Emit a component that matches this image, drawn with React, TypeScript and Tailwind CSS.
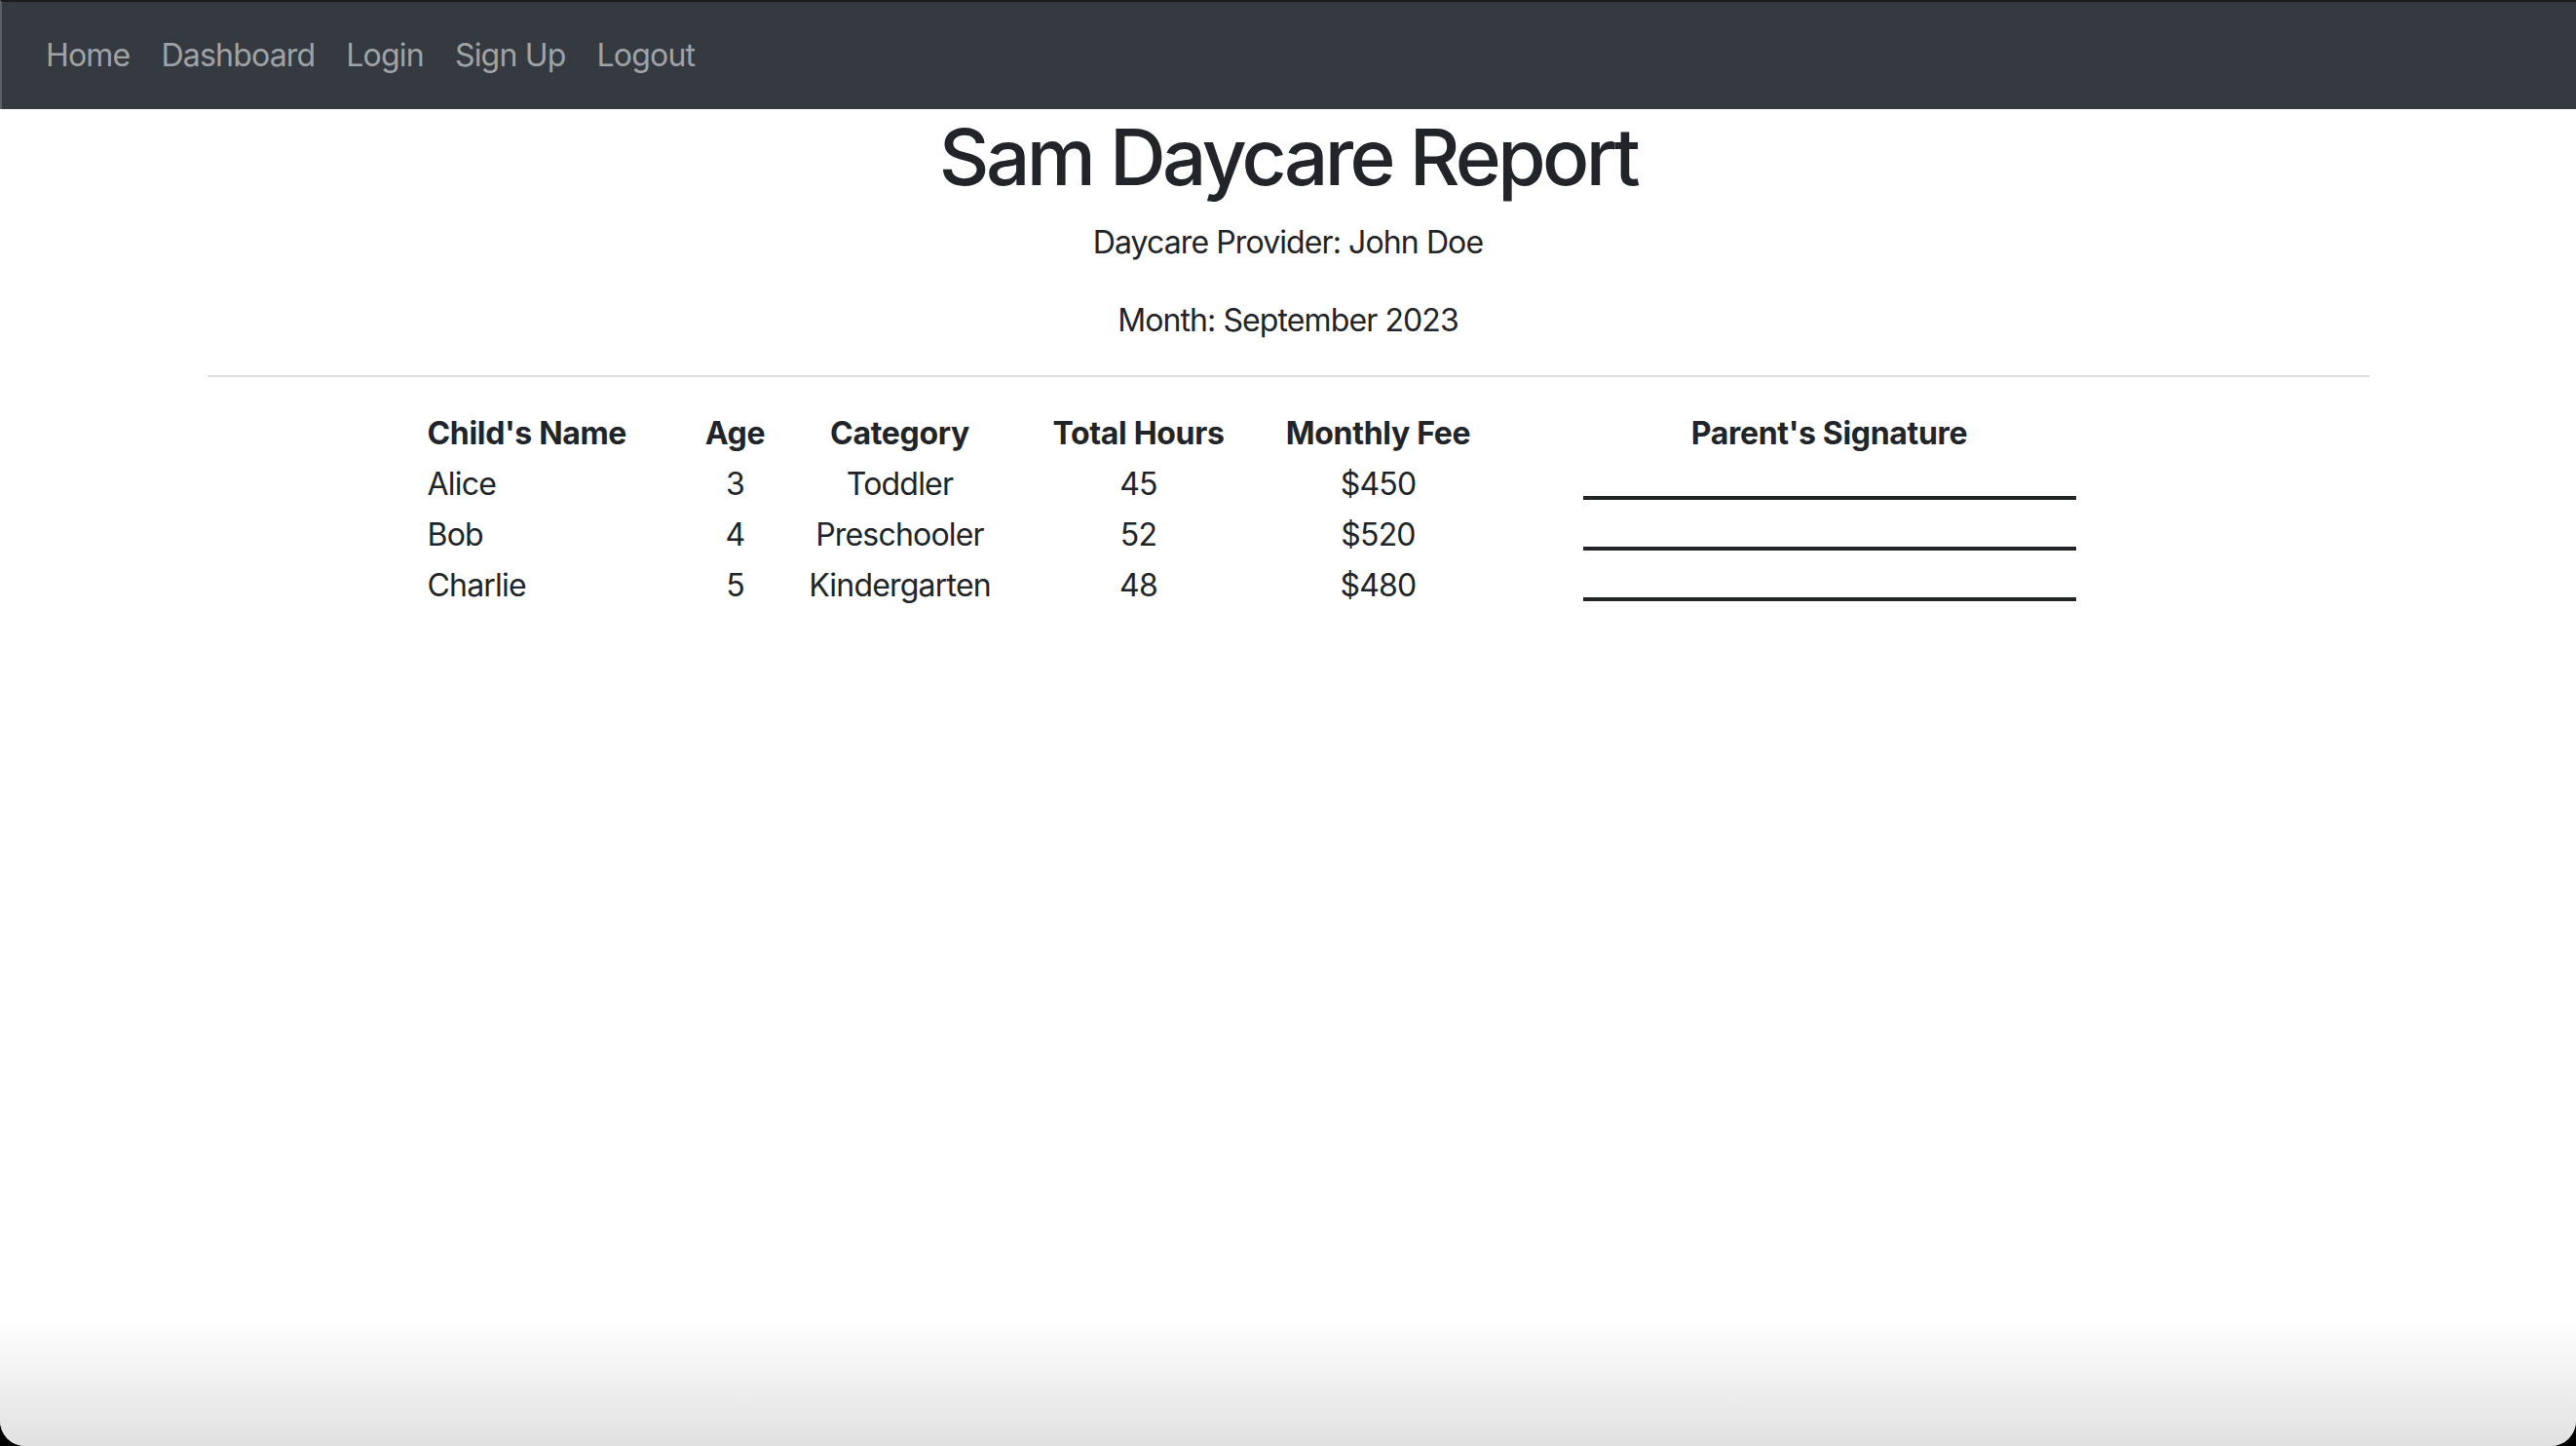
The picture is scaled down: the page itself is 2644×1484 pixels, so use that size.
import React from 'react';

const links = ['Home', 'Dashboard', 'Login', 'Sign Up', 'Logout'];

const children = [
  { name: 'Alice', age: 3, category: 'Toddler', hours: 45, fee: '$450' },
  { name: 'Bob', age: 4, category: 'Preschooler', hours: 52, fee: '$520' },
  { name: 'Charlie', age: 5, category: 'Kindergarten', hours: 48, fee: '$480' },
];

export default function App() {
  return (
    <div className="h-[1484px] w-full bg-black font-['Inter','Noto_Sans',sans-serif] text-[#212529]">
      <div className="relative h-full w-full overflow-hidden rounded-b-[26px] bg-white">
        <nav className="flex h-[112px] items-center border-t-2 border-l-2 border-t-[#1b1c1e] border-l-[#5d6165] bg-[#343a40] pl-[29px]">
          {links.map((l) => (
            <a key={l} href="#" className="px-4 text-[32px] leading-[48px] tracking-[-0.025em] text-[#a0a3a6]">
              {l}
            </a>
          ))}
        </nav>

        <div className="mx-auto w-[2219px]">
          <h1 className="mb-4 pt-[1px] text-center text-[80px] font-medium leading-[96px] tracking-[-0.045em]">Sam Daycare Report</h1>
          <p className="mb-8 text-center text-[32px] leading-[48px] tracking-[-0.028em]">Daycare Provider: John Doe</p>
          <p className="mb-8 text-center text-[32px] leading-[48px] tracking-[-0.028em]">Month: September 2023</p>
          <hr className="mb-8 border-t-2 border-[#dedede]" />

          <table className="ml-[206px] border-collapse text-[32px] leading-[48px]">
            <thead>
              <tr className="h-[52px]">
                <th className="w-[266px] pl-5 text-left font-bold tracking-[-0.01em]">Child's Name</th>
                <th className="w-[140px] text-center font-bold tracking-[-0.01em]">Age</th>
                <th className="w-[198px] text-center font-bold tracking-[-0.01em]">Category</th>
                <th className="w-[292px] text-center font-bold tracking-[-0.01em]">Total Hours</th>
                <th className="w-[200px] text-center font-bold tracking-[-0.01em]">Monthly Fee</th>
                <th className="w-[726px] text-center font-bold tracking-[-0.01em]">Parent's Signature</th>
              </tr>
            </thead>
            <tbody>
              {children.map((c) => (
                <tr key={c.name} className="h-[52px] tracking-[-0.025em]">
                  <td className="pl-5 text-left">{c.name}</td>
                  <td className="text-center">{c.age}</td>
                  <td className="text-center">{c.category}</td>
                  <td className="text-center">{c.hours}</td>
                  <td className="text-center">{c.fee}</td>
                  <td className="align-top">
                    <div className="mx-auto mt-[38px] h-[4px] w-[506px] bg-[#212529]" />
                  </td>
                </tr>
              ))}
            </tbody>
          </table>
        </div>

        <div className="pointer-events-none absolute inset-x-0 bottom-0 h-[130px] bg-linear-to-b from-white/0 to-[#e1e1e1]" />
      </div>
    </div>
  );
}
